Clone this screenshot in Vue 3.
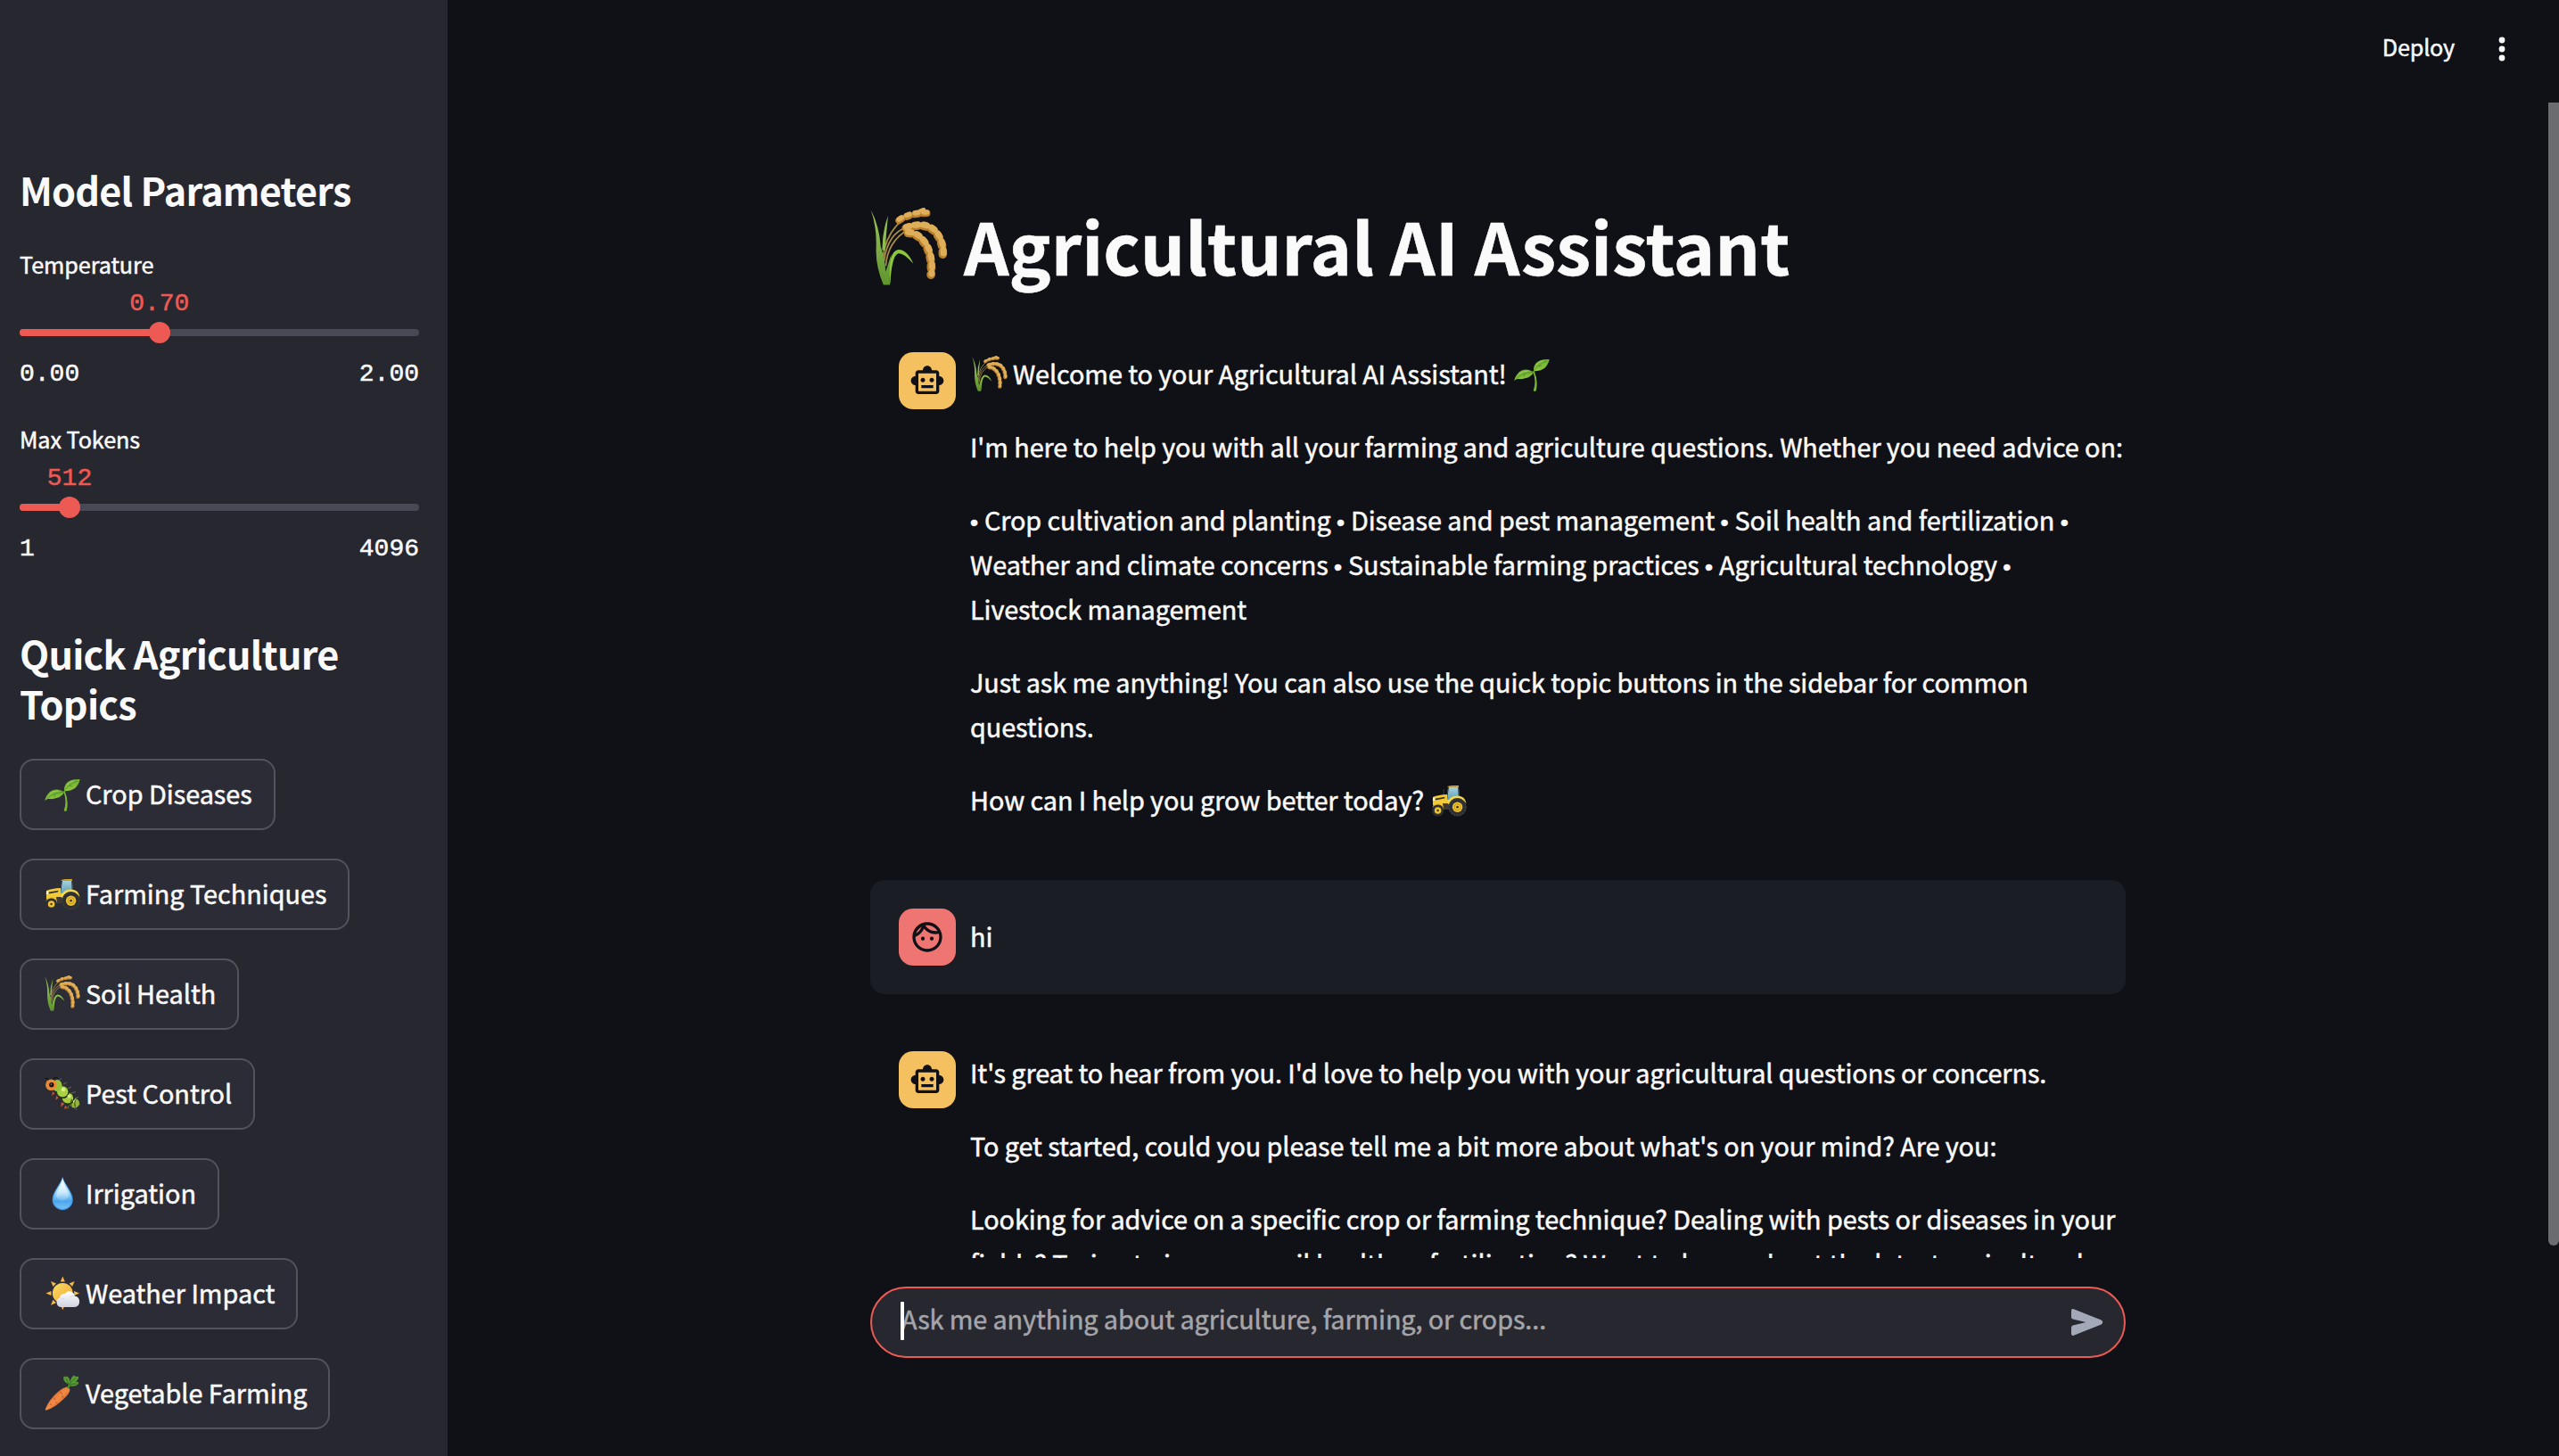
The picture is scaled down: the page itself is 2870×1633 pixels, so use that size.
<script setup>
import { h } from 'vue'

const sliders = [
  { label: 'Temperature', value: '0.70', min: '0.00', max: '2.00', percent: 35 },
  { label: 'Max Tokens', value: '512', min: '1', max: '4096', percent: 12.5 },
]

const topics = [
  { icon: 'seedling', label: 'Crop Diseases' },
  { icon: 'tractor', label: 'Farming Techniques' },
  { icon: 'rice', label: 'Soil Health' },
  { icon: 'bug', label: 'Pest Control' },
  { icon: 'drop', label: 'Irrigation' },
  { icon: 'sun', label: 'Weather Impact' },
  { icon: 'carrot', label: 'Vegetable Farming' },
]

const Emoji = (props) =>
  h('svg', { class: 'emoji', viewBox: '0 0 40 40', 'aria-hidden': 'true' }, [
    h('use', { href: '#e-' + props.name }),
  ])
Emoji.props = ['name']

const robotPath =
  'M20 9V7c0-1.1-.9-2-2-2h-3c0-1.66-1.34-3-3-3S9 3.34 9 5H6c-1.1 0-2 .9-2 2v2c-1.66 0-3 1.34-3 3s1.34 3 3 3v4c0 1.1.9 2 2 2h12c1.1 0 2-.9 2-2v-4c1.66 0 3-1.34 3-3s-1.34-3-3-3zm-2 10H6V7h12v12zm-9-6c-.83 0-1.5-.67-1.5-1.5S8.17 10 9 10s1.5.67 1.5 1.5S9.83 13 9 13zm7.5-1.5c0 .83-.67 1.5-1.5 1.5s-1.5-.67-1.5-1.5.67-1.5 1.5-1.5 1.5.67 1.5 1.5zM8 15h8v2H8v-2z'
const facePath =
  'M10.25 13c0 .69-.56 1.25-1.25 1.25S7.75 13.69 7.75 13s.56-1.25 1.25-1.25 1.25.56 1.25 1.25zM15 11.75c-.69 0-1.25.56-1.25 1.25s.56 1.25 1.25 1.25 1.25-.56 1.25-1.25-.56-1.25-1.25-1.25zM22 12c0 5.52-4.48 10-10 10S2 17.52 2 12 6.48 2 12 2s10 4.48 10 10zM10.66 4.12C12.06 6.44 14.6 8 17.5 8c.46 0 .91-.05 1.34-.12C17.44 5.56 14.9 4 12 4c-.46 0-.91.05-1.34.12zM4.42 9.47c1.71-.97 3.03-2.55 3.66-4.44C6.37 6 5.05 7.58 4.42 9.47zM20 12c0-.78-.12-1.53-.33-2.24-.7.15-1.42.24-2.17.24-3.13 0-5.92-1.44-7.76-3.69C8.69 8.87 6.6 10.88 4 11.86c.01.04 0 .09 0 .14 0 4.41 3.59 8 8 8s8-3.59 8-8z'
</script>

<template>
  <div class="app">
    <svg class="sprite" aria-hidden="true">
      <defs>
        <linearGradient id="leaf" x1="0" y1="0" x2="0" y2="1">
          <stop offset="0" stop-color="#6fae33" /><stop offset="1" stop-color="#8cc63c" />
        </linearGradient>
        <linearGradient id="grass" x1="0" y1="0" x2="0" y2="1">
          <stop offset="0" stop-color="#9cc65c" /><stop offset="1" stop-color="#5f942d" />
        </linearGradient>
        <linearGradient id="water" x1="0" y1="0" x2="0" y2="1">
          <stop offset="0" stop-color="#c4e9fa" /><stop offset=".45" stop-color="#a5dcf8" />
          <stop offset=".75" stop-color="#4ba6ee" /><stop offset="1" stop-color="#79c3f5" />
        </linearGradient>
        <linearGradient id="shine" x1="0" y1="0" x2="0" y2="1">
          <stop offset="0" stop-color="#fff" /><stop offset="1" stop-color="#fff" stop-opacity=".1" />
        </linearGradient>
        <linearGradient id="sunny" x1="0" y1="0" x2="1" y2="1">
          <stop offset="0" stop-color="#f9dc62" /><stop offset="1" stop-color="#f3a63a" />
        </linearGradient>
        <linearGradient id="cloud" x1="0" y1="0" x2="0" y2="1">
          <stop offset="0" stop-color="#fff" /><stop offset="1" stop-color="#cfd2df" />
        </linearGradient>
        <linearGradient id="root" x1="0" y1="0" x2="1" y2="1">
          <stop offset=".25" stop-color="#e0652c" /><stop offset=".5" stop-color="#f08c45" /><stop offset=".8" stop-color="#cf5526" />
        </linearGradient>
        <linearGradient id="glass" x1="0" y1="0" x2="0" y2="1">
          <stop offset="0" stop-color="#a6d3e0" /><stop offset="1" stop-color="#5f9fb5" />
        </linearGradient>

        <symbol id="e-seedling" viewBox="0 0 40 40">
          <path d="M21 17.5 Q25.6 28 21.7 39.2 Q23.4 40.3 24.8 39.2 Q27.4 28 22.6 17Z" fill="#7ab536" />
          <path d="M21.9 17.4 C21.6 9 26.5 3.2 39.7 4 C37.5 13 33 17 21.9 17.4Z" fill="url(#leaf)" />
          <path d="M22 18.6 C13.5 12.6 3.6 15.6 .2 28.2 C3 24.8 6 26.6 9.5 26 C15 25.4 20 23 22 18.6Z" fill="url(#leaf)" />
          <path d="M22 17.2 Q27 9.5 37 5.8 M21.5 18.5 Q11 18.5 2.5 25.5 M27 11 L31 11.8 M12 20 L11 23.5" stroke="#4f8a26" stroke-width=".8" fill="none" />
          <path d="M25 10 Q28 6.5 33 5.5 M6 20 Q10 16.5 16 17" stroke="#9bd05a" stroke-width="1" fill="none" />
        </symbol>

        <symbol id="e-tractor" viewBox="0 0 40 40">
          <path d="M14.2 8 V15" stroke="#33363a" stroke-width="1.2" />
          <path d="M19.3 5.5 H31 L31.8 20 H17Z" fill="url(#glass)" />
          <path d="M19.6 5.5 L17.6 19 M30.6 5.5 L31.2 18" stroke="#33393c" stroke-width="1" fill="none" />
          <path d="M18.2 5.4 Q19 4 24 3.9 H31 V5.8 H18.2Z" fill="#d9a52a" />
          <path d="M2 17 Q8 14.3 18 14 V20 H26 L24 31 H13 L12 26 L2 26.5Z" fill="#f2ca35" />
          <path d="M4 18.7 L15.5 16.8 L15 18.6 L4.5 20.6Z" fill="#33332d" />
          <path d="M13 24 H20 V31 H14Z" fill="#3c3a33" />
          <path d="M2 17.6 h2.5 v3.4 H1.8Z" fill="#fff6cf" />
          <path d="M18.5 24 Q20 15.5 30 15.6 Q38 16 39.5 24 Q34 18.6 28 19.2 Q23 20 21 26Z" fill="#f7d84a" />
          <circle cx="29.6" cy="28.2" r="10.2" fill="#2d2f33" />
          <circle cx="29.6" cy="28.2" r="9.4" fill="none" stroke="#43464a" stroke-width="1.3" stroke-dasharray="1.6 1.8" />
          <circle cx="29.6" cy="28.2" r="5.7" fill="#efc431" />
          <circle cx="29.6" cy="28.2" r="3.6" fill="none" stroke="#b98516" stroke-width=".8" />
          <circle cx="29.6" cy="28.2" r="1.4" fill="#4a3a14" />
          <path d="M1.2 28.5 Q4 23.8 10.5 24.5 L14 28 Q8 25.5 1.2 28.5Z" fill="#e2b32c" />
          <circle cx="7.6" cy="32" r="6.6" fill="#2d2f33" />
          <circle cx="7.6" cy="32" r="3.8" fill="#efc431" />
          <circle cx="7.6" cy="32" r="1.3" fill="#4a3a14" />
        </symbol>

        <symbol id="e-rice" viewBox="0 0 40 40">
          <g fill="none" stroke="#a98e45" stroke-width=".8">
            <path d="M6.5 26 Q8 13 17 6" /><path d="M7 28 Q9 13 19 10" /><path d="M8 30 Q9 17 20 11" />
          </g>
          <path d="M9.5 33 Q10 22.5 14.5 21.6 Q19 21.5 22.2 28.8 Q17.5 23.5 14.4 23.6 Q11 25 10.3 39.5Z" fill="#8cc63c" />
          <path d="M6.2 22 Q6 13 9.2 4 Q8.4 12 7.6 22Z" fill="#8fbc50" />
          <path d="M.3 1.2 Q4.6 9 5.4 20 Q7.5 26 8 33 L10.8 24 Q9.6 32 10.2 39.8 H6.8 Q3 31 3 22 Q3.6 10 .3 1.2Z" fill="url(#grass)" />
          <g fill="none" stroke-linecap="round">
            <g stroke="#b97f2c" stroke-width="3.6" stroke-dasharray="1.6 2.9">
              <path d="M14.8 6.6 Q20 3 30 2.8" />
              <path d="M18.5 10.5 Q29 7 34 13 Q37.6 18 37.4 24" stroke-width="4.4" />
              <path d="M19.5 13 Q26 13.5 29.5 21 Q32 27 31.3 34.6" stroke-width="4.4" />
            </g>
            <g stroke="#dfae58" stroke-width="2.6" stroke-dasharray="1.7 2.8">
              <path d="M14.8 6 Q20 2 30 2.3" />
              <path d="M18.5 10 Q29 6.4 34.4 12.6 Q38 18 37.8 23.4" stroke-width="3.2" />
              <path d="M19.5 12.5 Q26.4 13 30 20.6 Q32.5 27 31.7 34" stroke-width="3.2" />
            </g>
            <path d="M25.5 1.6 L27.6 .8" stroke="#dfae58" stroke-width="1.8" />
          </g>
        </symbol>

        <symbol id="e-bug" viewBox="0 0 40 40">
          <g stroke="#6f7a58" stroke-width=".8" fill="none">
            <path d="M16 6 L19 3.5 M21 10 L25 8 M26 15 L30 13 M30 20 L35 18.5 M34 26 L38 24.5 M36 31 L40 33 M33 35 L36 39 M27 34 L26 38 M22 31 L19 35" />
            <path d="M5 6 Q3 2 .5 4 M9 5 Q12 1 15 3.4" stroke="#15150f" stroke-width="1.1" />
          </g>
          <path d="M9 18 l-.8 5 3-2.5z M13 23 l-.5 5 3.2-3z M19 30 l-1 5 4-3z M23 34 l-1 4 4-2z" fill="#d3512a" />
          <ellipse cx="33.5" cy="31.3" rx="5.6" ry="5.2" fill="#93b832" />
          <ellipse cx="27" cy="26.3" rx="6.6" ry="6.4" fill="#1f2b12" />
          <ellipse cx="26" cy="25.4" rx="6.2" ry="6" fill="#a4cc3c" />
          <ellipse cx="21" cy="19.4" rx="6.6" ry="6.5" fill="#1f2b12" />
          <ellipse cx="20.2" cy="18.4" rx="6.2" ry="6.1" fill="#a9d242" />
          <ellipse cx="14.2" cy="11.6" rx="5.4" ry="6.6" fill="#97c338" />
          <circle cx="21" cy="16" r="2.3" fill="#d6ee86" /><circle cx="27.5" cy="23.4" r="2" fill="#d6ee86" />
          <circle cx="33.5" cy="29.4" r="1.6" fill="#d6ee86" />
          <path d="M30.6 27 Q28.6 31 30.4 35.6 M34.5 28 Q33 31.5 34.5 35.5" stroke="#33441a" stroke-width="1.1" fill="none" />
          <circle cx="7.4" cy="10.8" r="6.3" fill="#ea8a34" />
          <circle cx="7.8" cy="10.8" r="2.7" fill="#1b1410" /><circle cx="7.3" cy="10" r=".6" fill="#fff" />
        </symbol>

        <symbol id="e-drop" viewBox="0 0 40 40">
          <path d="M20.2 1.8 C22.4 10.5 31.8 18.5 31.8 27.8 A11.6 11.4 0 0 1 8.6 27.8 C8.6 18.5 18 10.5 20.2 1.8Z" fill="#3d97e6" />
          <path d="M20.2 3 C22.2 11 30.6 19 30.6 27.8 A10.4 10.3 0 0 1 9.8 27.8 C9.8 19 18.2 11 20.2 3Z" fill="url(#water)" />
          <path d="M20.2 4.5 C21.2 11 27.2 18.5 27 24 Q24 29 20 28.6 Q15 28.5 13.2 24 C13.2 18 19.2 11 20.2 4.5Z" fill="url(#shine)" />
        </symbol>

        <symbol id="e-sun" viewBox="0 0 40 40">
          <g fill="#f4b844">
            <path id="ray" d="M20.3 1.6 L22.8 7.6 H17.8Z" />
            <use href="#ray" transform="rotate(45 20.3 20.4)" /><use href="#ray" transform="rotate(90 20.3 20.4)" />
            <use href="#ray" transform="rotate(180 20.3 20.4)" /><use href="#ray" transform="rotate(225 20.3 20.4)" />
            <use href="#ray" transform="rotate(270 20.3 20.4)" /><use href="#ray" transform="rotate(315 20.3 20.4)" />
          </g>
          <circle cx="20.3" cy="20.4" r="11.4" fill="url(#sunny)" />
          <path d="M18.6 36 A5.4 5.4 0 0 1 17 25.6 A5 5 0 0 1 22.6 21 A6.2 6.2 0 0 1 33.8 23.6 A6.3 6.3 0 0 1 34 36Z" fill="url(#cloud)" />
          <path d="M18 27 Q20 25.6 22 26.8 M28 25 Q31 22.6 33.8 24" stroke="#d5d8e4" stroke-width=".9" fill="none" />
        </symbol>

        <symbol id="e-carrot" viewBox="0 0 40 40">
          <path d="M22.8 14.2 Q27 12 28.4 16.4 Q28.6 20 22 26.6 Q12 36.6 2.4 39.6 Q.2 40 1 38 Q5 28 14 20 Q19 15.4 22.8 14.2Z" fill="url(#root)" />
          <path d="M17 18.8 L20 21.4 M10 25.6 L12.6 28 M21.6 25.6 L19 23.6 M14.6 32 L12.6 30.4 M6 32.6 L8 34" stroke="#b9491d" stroke-width=".9" />
          <path d="M25.2 15.2 Q26 11 29 9 Q29.6 12 27.2 15.6Z" fill="#4b8a2c" />
          <path d="M26 10 Q19.6 7 21.6 1.6 Q24 3 24 1.4 Q28.4 2.2 28.4 8 Q30 1.6 33.2 .4 Q34.4 2.4 38 1.8 Q38.6 5.6 34.8 7.4 Q38.4 7.6 38.2 9 Q36.6 13.6 28.6 12.6Z" fill="#569a32" />
          <path d="M24 4 Q26.6 7.6 27.4 11 Q30 7 35 3.6 M28 11.4 Q32 9.6 36 10" stroke="#2f6b20" stroke-width=".9" fill="none" />
        </symbol>
      </defs>
    </svg>

    <aside class="sidebar">
      <h2 class="heading">Model Parameters</h2>
      <div class="sliders">
        <div v-for="s in sliders" :key="s.label" class="slider">
          <div class="slider-label">{{ s.label }}</div>
          <div class="slider-values">
            <span class="slider-value" :style="{ left: s.percent + '%' }">{{ s.value }}</span>
          </div>
          <div class="track">
            <div class="fill" :style="{ width: s.percent + '%' }"></div>
            <div class="thumb" :style="{ left: s.percent + '%' }"></div>
          </div>
          <div class="ticks"><span>{{ s.min }}</span><span>{{ s.max }}</span></div>
        </div>
      </div>
      <h2 class="heading">Quick Agriculture Topics</h2>
      <div class="topics">
        <button v-for="t in topics" :key="t.label" class="topic">
          <span><Emoji :name="t.icon" /> {{ t.label }}</span>
        </button>
      </div>
    </aside>

    <main class="main">
      <header class="toolbar">
        <span class="deploy">Deploy</span>
        <svg class="menu" viewBox="0 0 8 28">
          <circle cx="4" cy="4" r="3.4" /><circle cx="4" cy="14" r="3.4" /><circle cx="4" cy="24" r="3.4" />
        </svg>
      </header>

      <section class="scroll">
        <h1 class="title"><Emoji name="rice" /> Agricultural AI Assistant</h1>

        <article class="message">
          <div class="avatar bot"><svg viewBox="0 0 24 24"><path :d="robotPath" /></svg></div>
          <div class="body">
            <p><Emoji name="rice" /> Welcome to your Agricultural AI Assistant! <Emoji name="seedling" /></p>
            <p>I'm here to help you with all your farming and agriculture questions. Whether you need advice on:</p>
            <p>
              <b>•</b> Crop cultivation and planting <b>•</b> Disease and pest management <b>•</b> Soil health and fertilization <b>•</b><br />
              Weather and climate concerns <b>•</b> Sustainable farming practices <b>•</b> Agricultural technology <b>•</b><br />
              Livestock management
            </p>
            <p>
              Just ask me anything! You can also use the quick topic buttons in the sidebar for common<br />
              questions.
            </p>
            <p>How can I help you grow better today? <Emoji name="tractor" /></p>
          </div>
        </article>

        <article class="message user">
          <div class="avatar human"><svg viewBox="0 0 24 24"><path :d="facePath" /></svg></div>
          <div class="body"><p>hi</p></div>
        </article>

        <article class="message">
          <div class="avatar bot"><svg viewBox="0 0 24 24"><path :d="robotPath" /></svg></div>
          <div class="body">
            <p>It's great to hear from you. I'd love to help you with your agricultural questions or concerns.</p>
            <p>To get started, could you please tell me a bit more about what's on your mind? Are you:</p>
            <p>
              Looking for advice on a specific crop or farming technique? Dealing with pests or diseases in your<br />
              <span class="loose">fields? Trying to improve soil health or fertilization? Want to know about the latest agricultural</span>
            </p>
          </div>
        </article>
      </section>

      <footer class="bottom">
        <div class="chat-input">
          <span class="placeholder">Ask me anything about agriculture, farming, or crops...</span>
          <svg class="send" viewBox="0 0 36 30">
            <path d="M0 2.2 Q0 -.6 2.8 .3 L33.6 12.6 Q37 15 33.6 17.4 L2.8 29.7 Q0 30.6 0 27.8 V21 Q0 19 1.8 18.5 L16.4 15 L1.8 11.5 Q0 11 0 9Z" />
          </svg>
          <i class="caret"></i>
        </div>
      </footer>
      <div class="scrollbar"></div>
    </main>
  </div>
</template>

<style>
body {
  margin: 0;
  background: #101116;
}
</style>

<style scoped>
.app {
  display: flex;
  width: 2870px;
  height: 1633px;
  overflow: hidden;
  background: #101116;
  color: #fafafa;
  font-family: "Noto Sans CJK SC", "Noto Sans", sans-serif;
  font-size: 28.8px;
  line-height: 50px;
  -webkit-text-stroke: 0.5px currentColor;
}
.sprite {
  position: absolute;
  width: 0;
  height: 0;
}
:deep(.emoji) {
  display: inline-block;
  width: 40px;
  height: 40px;
  margin: -10px 0 -10px 1.5px;
  vertical-align: 2px;
  -webkit-text-stroke: 0;
}
.sidebar {
  box-sizing: border-box;
  flex: none;
  width: 502px;
  padding: 184px 32px 0 22px;
  background: #272730;
}
.heading {
  margin: 0;
  font-size: 43.2px;
  line-height: 56px;
  font-weight: 700;
  letter-spacing: -0.79px;
  -webkit-text-stroke: 0;
}
.sliders {
  display: flex;
  flex-direction: column;
  gap: 36px;
  padding: 36px 0 72px;
}
.slider-label {
  font-size: 25.2px;
  line-height: 40px;
  letter-spacing: -0.08px;
}
.slider-values,
.ticks {
  height: 32px;
  font-family: "Liberation Mono", monospace;
  font-size: 28px;
  line-height: 32px;
}
.slider-values {
  position: relative;
  margin-top: 9px;
  color: #ed5a53;
}
.slider-value {
  position: absolute;
  transform: translateX(-50%);
}
.track {
  position: relative;
  height: 8px;
  margin: 12px 0 27px;
  border-radius: 4px;
  background: #484954;
}
.fill {
  height: 8px;
  border-radius: 4px;
  background: #ed5a53;
}
.thumb {
  position: absolute;
  top: -8px;
  width: 24px;
  height: 24px;
  margin-left: -12px;
  border-radius: 50%;
  background: #ed5a53;
}
.ticks {
  display: flex;
  justify-content: space-between;
}
.topics {
  display: flex;
  flex-direction: column;
  align-items: flex-start;
  gap: 32px;
  margin-top: 35px;
}
.topic {
  box-sizing: border-box;
  height: 80px;
  padding: 0 24px 2px;
  border: 2px solid #53535c;
  border-radius: 16px;
  background: #2c2c36;
  color: inherit;
  font: inherit;
  white-space: nowrap;
}
.main {
  position: relative;
  display: flex;
  flex-direction: column;
  flex: 1;
  min-width: 0;
}
.toolbar {
  box-sizing: border-box;
  display: flex;
  flex: none;
  align-items: center;
  justify-content: flex-end;
  gap: 49px;
  height: 115px;
  padding: 0 60px 5px 0;
}
.deploy {
  margin-top: -7px;
  font-size: 25.1px;
  letter-spacing: -0.15px;
}
.menu {
  width: 8px;
  height: 28px;
  fill: #fafafa;
}
.scroll {
  box-sizing: border-box;
  width: 1408px;
  height: 1296px;
  margin-left: 474px;
  padding-top: 107px;
  overflow: hidden;
}
.title {
  margin: 0 0 35px;
  font-size: 79px;
  line-height: 106px;
  font-weight: 700;
  white-space: nowrap;
}
.title :deep(.emoji) {
  width: 87px;
  height: 87px;
  margin: 0;
  vertical-align: -11px;
}
.message {
  display: flex;
  gap: 16px;
  margin-bottom: 32px;
  padding: 32px;
}
.user {
  border-radius: 16px;
  background: #1a1d24;
}
.avatar {
  display: flex;
  flex: none;
  align-items: center;
  justify-content: center;
  width: 64px;
  height: 64px;
  border-radius: 16px;
}
.avatar svg {
  width: 40px;
  height: 40px;
  fill: #101116;
}
.bot {
  background: #f5c05f;
}
.human {
  background: #ee7571;
}
.body {
  position: relative;
  top: -1.5px;
  letter-spacing: -0.075px;
  white-space: nowrap;
}
.user .body {
  align-self: center;
}
.body p {
  margin: 0 0 32px;
}
.body p:last-child {
  margin-bottom: 0;
}
.body b {
  display: inline-block;
  width: 9.5px;
  font-family: "Liberation Sans", sans-serif;
  font-size: 26px;
  font-weight: 400;
  line-height: 1;
}
.loose {
  letter-spacing: -0.04px;
}
.bottom {
  height: 190px;
  margin-left: 474px;
  padding-top: 32px;
}
.chat-input {
  position: relative;
  box-sizing: border-box;
  display: flex;
  align-items: center;
  justify-content: space-between;
  width: 1408px;
  height: 80px;
  padding: 0 23px 0 33px;
  border: 2px solid #ed5a53;
  border-radius: 40px;
  background: #272730;
}
.placeholder {
  margin-top: -9px;
  color: #a5a5a9;
  letter-spacing: -0.1px;
}
.send {
  width: 36px;
  height: 30px;
  fill: #a3a8b8;
}
.caret {
  position: absolute;
  left: 32px;
  top: 15px;
  width: 4px;
  height: 43px;
  border-radius: 1px;
  background: #fff;
}
.scrollbar {
  position: absolute;
  top: 115px;
  right: 0;
  width: 12px;
  height: 1282px;
  border-radius: 0 0 6px 6px;
  background: #6b6c70;
}
</style>
